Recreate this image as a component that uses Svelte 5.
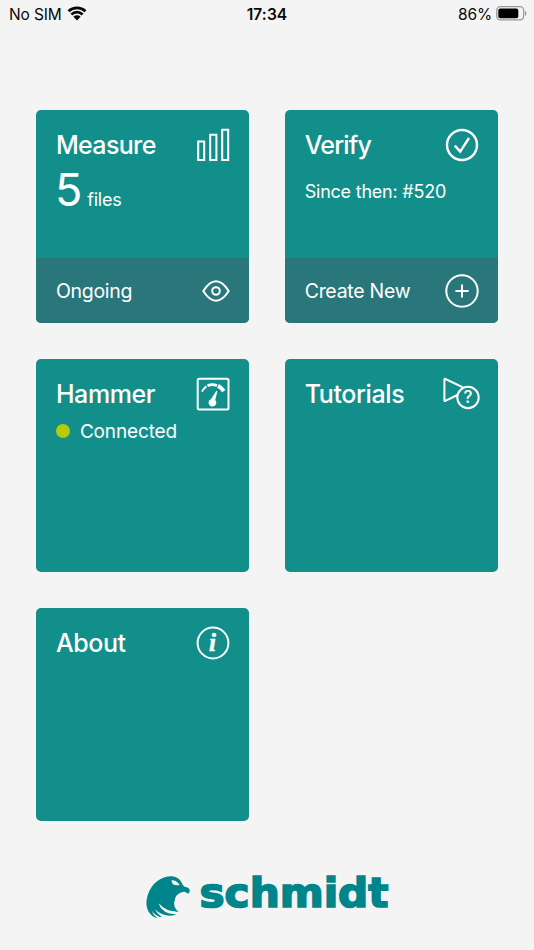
<script lang="ts">
	type Tile = {
		title: string;
		icon: 'bars' | 'check' | 'gauge' | 'tutorial' | 'info';
		count?: number;
		note?: string;
		status?: string;
		action?: { label: string; icon: 'eye' | 'plus' };
	};

	const tiles: Tile[] = [
		{ title: 'Measure', icon: 'bars', count: 5, action: { label: 'Ongoing', icon: 'eye' } },
		{
			title: 'Verify',
			icon: 'check',
			note: 'Since then: #520',
			action: { label: 'Create New', icon: 'plus' }
		},
		{ title: 'Hammer', icon: 'gauge', status: 'Connected' },
		{ title: 'Tutorials', icon: 'tutorial' },
		{ title: 'About', icon: 'info' }
	];
</script>

<div class="screen">
	<header class="status-bar">
		<div class="carrier">
			<span>No SIM</span>
			<svg class="wifi" viewBox="0 0 20 15" aria-hidden="true">
				<path d="M1.5 5.2a12.5 12.5 0 0 1 17 0M4.4 8.4a8.2 8.2 0 0 1 11.2 0" />
				<path class="solid" d="M6.4 10.7a5.2 5.2 0 0 1 7.2 0L10 14.4z" />
			</svg>
		</div>
		<span class="time">17:34</span>
		<div class="battery">
			<span>86%</span>
			<svg class="battery-icon" viewBox="0 0 31 15" aria-hidden="true">
				<rect class="shell" x="0.7" y="0.7" width="27" height="13.2" rx="3.8" />
				<rect x="2.3" y="2.4" width="20" height="9.8" rx="2" />
				<path class="cap" d="M29 5c2 .7 2 4 0 4.8z" />
			</svg>
		</div>
	</header>

	<main class="tiles">
		{#each tiles as tile}
			<section class="tile">
				<div class="tile-header">
					<h2 class="{tile.icon}-title">{tile.title}</h2>
					{#if tile.icon === 'bars'}
						<svg class="icon" viewBox="0 0 34 34" aria-hidden="true">
							<path d="M2.2 13.6h6v18.4h-6zM14.2 6.8h6.2v25.2h-6.2zM26.2 1.8h6v30.2h-6z" />
						</svg>
					{:else if tile.icon === 'check'}
						<svg class="icon check" viewBox="0 0 34 34" aria-hidden="true">
							<circle cx="17" cy="17" r="15" />
							<path d="M9.8 17.6l5.4 6 8.8-13.6" />
						</svg>
					{:else if tile.icon === 'gauge'}
						<svg class="icon" viewBox="0 0 34 34" aria-hidden="true">
							<rect x="1.7" y="1.7" width="30.8" height="30.8" rx="1.5" />
							<path d="M6 14.6q1.2-2.6 4.4-5.3" />
							<path class="arc-mid" d="M11.5 8.8q4.5-2.1 9.5-.3" />
							<path class="arc-end" d="M22 8.9q3.5 1.7 5.8 5.3" />
							<path class="solid" d="M20.4 13.7q1.1 0 .9 1.1l-2.1 8.1a3.9 3.9 0 1 1-4.1-.9z" />
						</svg>
					{:else if tile.icon === 'tutorial'}
						<svg class="tutorial-icon" viewBox="0 0 38 34" aria-hidden="true">
							<path d="M20.5 10.2L3.4 2Q2.4 1.5 2.4 2.7v20.5q0 1.2 1 .6L15.4 18" />
							<circle cx="26" cy="20.5" r="10.7" />
							<text x="26" y="26.2">?</text>
						</svg>
					{:else}
						<svg class="icon" viewBox="0 0 34 34" aria-hidden="true">
							<circle cx="17" cy="17" r="15.4" />
							<text x="16.6" y="25">i</text>
						</svg>
					{/if}
				</div>

				{#if tile.count}
					<p class="count"><span class="number">{tile.count}</span><span class="unit">files</span></p>
				{/if}
				{#if tile.note}
					<p class="note">{tile.note}</p>
				{/if}
				{#if tile.status}
					<p class="connection"><span class="dot"></span><span>{tile.status}</span></p>
				{/if}

				{#if tile.action}
					<div class="tile-action">
						<span>{tile.action.label}</span>
						{#if tile.action.icon === 'eye'}
							<svg class="eye" viewBox="0 0 28 22" aria-hidden="true">
								<path d="M1.3 11C9.5-2 18.5-2 26.7 11C18.5 24 9.5 24 1.3 11z" />
								<circle cx="14" cy="11" r="3.8" />
							</svg>
						{:else}
							<svg class="plus" viewBox="0 0 34 34" aria-hidden="true">
								<circle cx="17" cy="17" r="15.7" />
								<path d="M17 10.4v13.2M10.4 17h13.2" />
							</svg>
						{/if}
					</div>
				{/if}
			</section>
		{/each}
	</main>

	<footer class="brand">
		<svg class="eagle" viewBox="0 0 132 128" aria-hidden="true">
			<path
				d="M131 43Q132 54 123 52Q117 45 107 49Q93 54 88 65Q82 80 86 93Q90 102 98 107Q60 108 38 82Q44 104 68 112Q80 116 92 113Q80 122 60 118Q38 112 26 98Q32 112 48 124Q31 122 17 104Q22 118 35 127Q15 121 6 104Q-3 85 5 58Q13 31 34 15Q54 0 79 1Q98 3 107 20Q111 32 123 34Q130 37 131 43z"
			/>
			<path class="eye-cut" d="M76 13Q92 12 101 27Q88 29 80 24Q78 19 76 13z" />
		</svg>
		<svg class="wordmark" viewBox="0 0 190 36" role="img" aria-label="schmidt">
			<text x="-1.5" y="31" textLength="189" lengthAdjust="spacingAndGlyphs">schmidt</text>
		</svg>
	</footer>
</div>

<style>
	:global(body) {
		background: #f4f4f4;
	}

	.screen {
		box-sizing: border-box;
		width: 534px;
		height: 950px;
		overflow: hidden;
		background: #f4f4f4;
		font-family: Inter, 'Liberation Sans', sans-serif;
		color: #fff;
	}

	svg {
		display: block;
		flex-shrink: 0;
		overflow: visible;
		fill: none;
		stroke: currentColor;
		stroke-width: 2;
	}

	h2,
	p {
		margin: 0;
	}

	/* Status bar */
	.status-bar {
		display: grid;
		grid-template-columns: 1fr auto 1fr;
		align-items: center;
		height: 28px;
		padding: 0 7px 0 9px;
		color: #080808;
		font-size: 15.5px;
		letter-spacing: -0.15px;
	}

	.carrier,
	.battery {
		display: flex;
		align-items: center;
		gap: 5px;
	}

	.battery {
		justify-content: flex-end;
		gap: 4px;
	}

	.time {
		margin-right: 2px;
		font-weight: 600;
		letter-spacing: 0.1px;
	}

	.wifi {
		width: 20px;
		height: 15px;
		stroke-width: 2.8;
		margin-top: -2px;
	}

	.solid {
		fill: currentColor;
		stroke: none;
	}

	.battery-icon {
		width: 31px;
		height: 15px;
		margin-top: -2px;
		fill: #000;
		stroke: none;
	}

	.shell {
		fill: none;
		stroke: #999;
		stroke-width: 1.3;
	}

	.cap {
		fill: #999;
	}

	/* Tiles */
	.tiles {
		display: grid;
		grid-template-columns: repeat(2, 212.6px);
		grid-auto-rows: 212.8px;
		gap: 36.2px;
		padding: 82px 36.4px 0;
	}

	.tile {
		display: flex;
		flex-direction: column;
		overflow: hidden;
		border-radius: 5px;
		background: #138f8b;
	}

	.tile-header {
		display: flex;
		align-items: center;
		justify-content: space-between;
		height: 34px;
		padding: 18px 18.5px 0 19.5px;
	}

	h2 {
		font-size: 25px;
		font-weight: 500;
		line-height: 34px;
		letter-spacing: -0.4px;
		white-space: nowrap;
	}

	.bars-title {
		letter-spacing: -0.65px;
	}

	.check-title {
		letter-spacing: -0.8px;
	}

	.icon {
		width: 34px;
		height: 34px;
	}

	.check {
		stroke-width: 2.4;
	}

	.arc-mid {
		stroke-width: 2.7;
	}

	.arc-end {
		stroke-width: 4;
	}

	.icon text {
		fill: currentColor;
		stroke-width: 0.5;
		font: italic bold 25px 'Liberation Serif', serif;
		text-anchor: middle;
	}

	.tutorial-icon {
		width: 38px;
		height: 34px;
		margin-right: -1px;
	}

	.tutorial-icon text {
		fill: currentColor;
		stroke: none;
		font-size: 17px;
		font-weight: 500;
		text-anchor: middle;
	}

	.count {
		display: flex;
		align-items: baseline;
		gap: 5px;
		height: 56px;
		padding: 0 18.5px;
		line-height: 56px;
	}

	.number {
		font-size: 45px;
	}

	.unit,
	.note {
		font-size: 18px;
		letter-spacing: -0.22px;
	}

	.note {
		padding: 19px 19.5px 0;
		line-height: 22px;
		white-space: nowrap;
	}

	.connection {
		display: flex;
		align-items: center;
		gap: 10px;
		padding: 8px 19.5px 0;
		font-size: 19px;
		line-height: 25px;
		letter-spacing: -0.15px;
	}

	.dot {
		width: 14px;
		height: 14px;
		border-radius: 50%;
		background: #b5cc05;
	}

	.tile-action {
		display: flex;
		align-items: center;
		justify-content: space-between;
		height: 64.5px;
		margin-top: auto;
		padding: 0 19px 0 19.5px;
		background: #29777a;
		font-size: 19.5px;
		letter-spacing: -0.28px;
	}

	.eye {
		width: 28px;
		height: 22px;
	}

	.plus {
		width: 34px;
		height: 34px;
	}

	/* Brand */
	.brand {
		display: flex;
		align-items: flex-start;
		gap: 11px;
		padding: 55px 0 0 145.5px;
		color: #00858b;
	}

	.eagle {
		width: 44px;
		height: 42.7px;
		fill: currentColor;
		stroke: none;
	}

	.eye-cut {
		fill: #f4f4f4;
	}

	.wordmark {
		width: 190px;
		height: 36px;
	}

	.wordmark text {
		fill: currentColor;
		stroke-width: 1.7;
		font-family: 'DejaVu Sans', sans-serif;
		font-size: 40px;
		font-weight: 700;
	}
</style>
